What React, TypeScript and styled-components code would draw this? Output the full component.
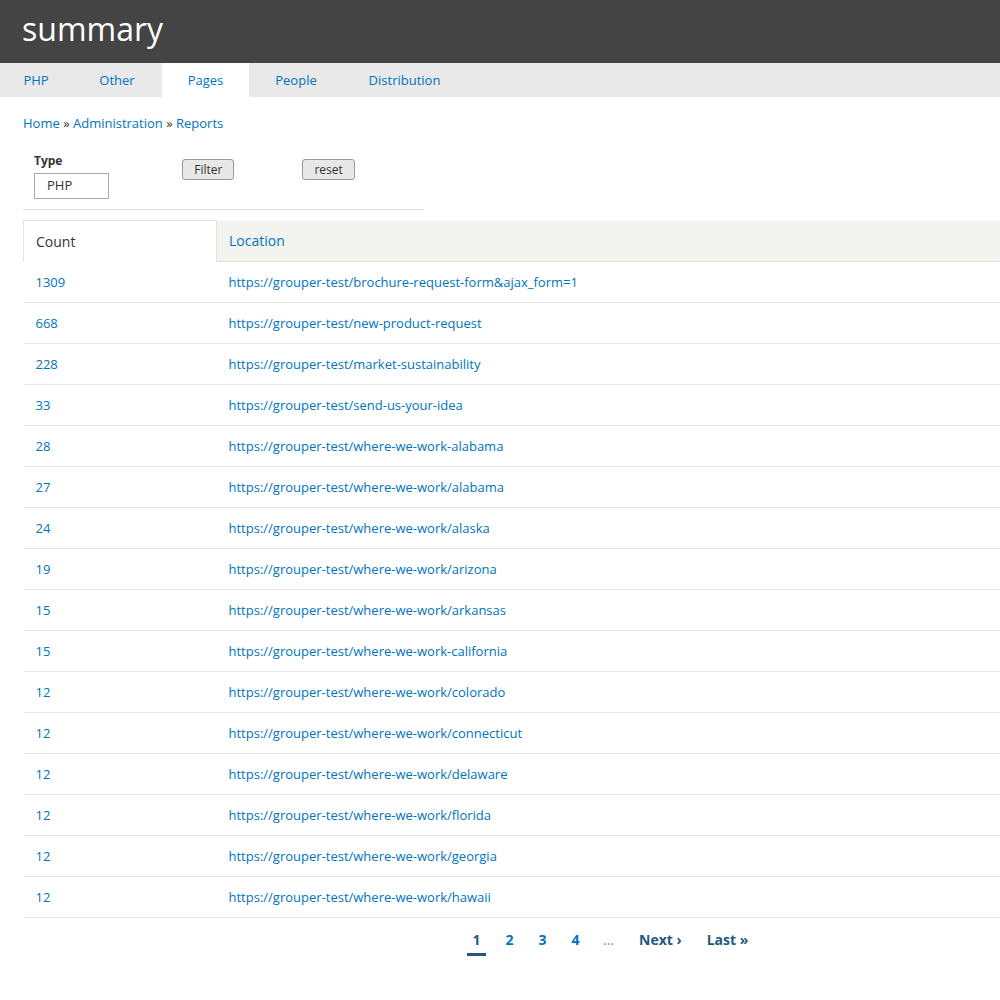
import React from 'react';
import styled, { createGlobalStyle } from 'styled-components';

const Global = createGlobalStyle`
  body { margin: 0; font-family: "Open Sans", sans-serif; background: #fff; }
`;

const Header = styled.header`
  height: 63px;
  background: #444;
  color: #fff;
  font-size: 32px;
  padding-left: 22px;
  line-height: 58px;
  box-sizing: border-box;
`;

const Tabs = styled.nav`
  display: flex;
  height: 34px;
  background: #e9e9e9;
`;

const Tab = styled.a<{ $active?: boolean; $w: number }>`
  width: ${p => p.$w}px;
  display: flex;
  align-items: center;
  justify-content: center;
  font-size: 13px;
  color: #0074bd;
  background: ${p => (p.$active ? '#fff' : 'transparent')};
`;

const Main = styled.main`
  padding: 17px 0 0 23px;
`;

const Crumbs = styled.div`
  font-size: 13px;
  color: #333;
  a { color: #0074bd; }
`;

const FilterForm = styled.div`
  display: flex;
  align-items: flex-start;
  width: 389px;
  margin-top: 22px;
  padding: 0 0 10px 11px;
  border-bottom: 1px solid #ddd;
`;

const Field = styled.div`
  display: flex;
  flex-direction: column;
  gap: 5px;
  width: 155px;
`;

const Label = styled.label`
  font-size: 12px;
  font-weight: 700;
  color: #333;
  line-height: 14px;
`;

const Select = styled.div`
  width: 75px;
  height: 26px;
  border: 1px solid #aaa;
  font-size: 13px;
  color: #333;
  padding-left: 12px;
  line-height: 22px;
  box-sizing: border-box;
`;

const Button = styled.button<{ $w: number }>`
  width: ${p => p.$w}px;
  height: 21px;
  margin-top: 5px;
  margin-right: 68px;
  border: 1px solid #999;
  border-radius: 3px;
  background: #e8e8e8;
  font-family: "Open Sans", sans-serif;
  font-size: 12px;
  color: #333;
  padding: 0;
`;

const Table = styled.table`
  border-collapse: collapse;
  width: 977px;
  margin-top: 10px;
  font-size: 13px;
`;

const Th = styled.th<{ $active?: boolean; $w?: number }>`
  text-align: left;
  font-weight: 400;
  font-size: 14px;
  height: 41px;
  padding: 0 12px;
  width: ${p => (p.$w ? `${p.$w}px` : 'auto')};
  box-sizing: border-box;
  color: ${p => (p.$active ? '#333' : '#0074bd')};
  background: ${p => (p.$active ? '#fff' : '#f3f3ef')};
  border: ${p => (p.$active ? '1px solid #e4e4e4' : 'none')};
  border-bottom: 1px solid #e0e0dc;
  ${p => (p.$active ? 'border-bottom: none;' : '')}
`;

const Td = styled.td`
  height: 40px;
  padding: 0 12px;
  color: #0074bd;
  border-bottom: 1px solid #e6e6e6;
`;

const Pager = styled.div`
  display: flex;
  padding: 10px 0 0 437px;
  font-size: 14px;
  font-weight: 700;
`;

const PageLink = styled.a<{ $current?: boolean; $muted?: boolean; $dark?: boolean }>`
  color: ${p => (p.$muted ? '#888' : p.$current || p.$dark ? '#26577e' : '#0074bd')};
  font-weight: ${p => (p.$muted ? 400 : 700)};
  padding: 2px 0 4px;
  margin: 0 7px;
  border-bottom: 3px solid ${p => (p.$current ? '#26577e' : 'transparent')};
  min-width: 19px;
  text-align: center;
  white-space: nowrap;
`;

const rows: [string, string][] = [
  ['1309', 'brochure-request-form&ajax_form=1'],
  ['668', 'new-product-request'],
  ['228', 'market-sustainability'],
  ['33', 'send-us-your-idea'],
  ['28', 'where-we-work-alabama'],
  ['27', 'where-we-work/alabama'],
  ['24', 'where-we-work/alaska'],
  ['19', 'where-we-work/arizona'],
  ['15', 'where-we-work/arkansas'],
  ['15', 'where-we-work-california'],
  ['12', 'where-we-work/colorado'],
  ['12', 'where-we-work/connecticut'],
  ['12', 'where-we-work/delaware'],
  ['12', 'where-we-work/florida'],
  ['12', 'where-we-work/georgia'],
  ['12', 'where-we-work/hawaii'],
];

export default function App() {
  return (
    <>
      <Global />
      <Header>summary</Header>
      <Tabs>
        <Tab $w={72}>PHP</Tab>
        <Tab $w={90}>Other</Tab>
        <Tab $w={87} $active>Pages</Tab>
        <Tab $w={94}>People</Tab>
        <Tab $w={123}>Distribution</Tab>
      </Tabs>
      <Main>
        <Crumbs>
          <a>Home</a> » <a>Administration</a> » <a>Reports</a>
        </Crumbs>
        <FilterForm>
          <Field>
            <Label>Type</Label>
            <Select>PHP</Select>
          </Field>
          <Button $w={54}>Filter</Button>
          <Button $w={55}>reset</Button>
        </FilterForm>
        <Table>
          <thead>
            <tr>
              <Th $active $w={193}>Count</Th>
              <Th>Location</Th>
            </tr>
          </thead>
          <tbody>
            {rows.map(([c, l], i) => (
              <tr key={i}>
                <Td>{c}</Td>
                <Td>https://grouper-test/{l}</Td>
              </tr>
            ))}
          </tbody>
        </Table>
        <Pager>
          <PageLink $current>1</PageLink>
          <PageLink>2</PageLink>
          <PageLink>3</PageLink>
          <PageLink>4</PageLink>
          <PageLink $muted>…</PageLink>
          <PageLink $dark style={{ marginLeft: 14 }}>Next ›</PageLink>
          <PageLink $dark style={{ marginLeft: 18 }}>Last »</PageLink>
        </Pager>
      </Main>
    </>
  );
}
